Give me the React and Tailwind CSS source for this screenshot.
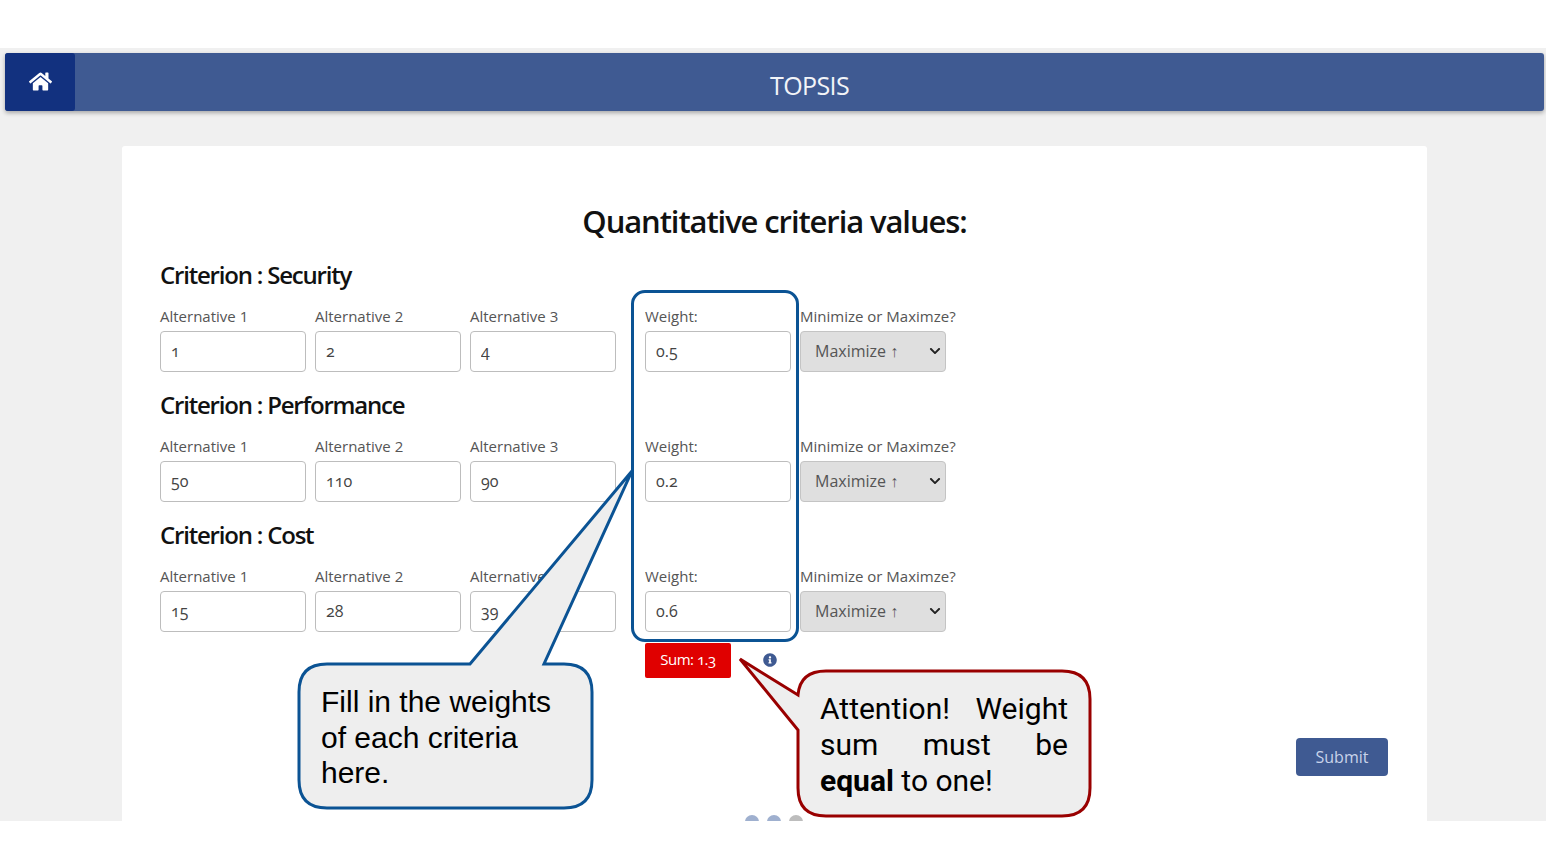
import { FaChevronDown, FaHome, FaInfoCircle } from "react-icons/fa";

const criteria = [
  { name: "Security", values: ["1", "2", "4"], weight: "0.5" },
  { name: "Performance", values: ["50", "110", "90"], weight: "0.2" },
  { name: "Cost", values: ["15", "28", "39"], weight: "0.6" },
];

const labelClass = "h-[18px] mb-[5px] text-[15px] leading-[16px] text-[#555] whitespace-nowrap";
const inputClass =
  "w-[146px] h-[41px] px-[10px] pb-[2px] bg-white border border-[#bdbdbd] rounded-[4px] text-[16px] text-[#444] oldstyle-nums outline-none";

const Field = ({ label, value, className = "" }) => (
  <div className={`w-[146px] ${className}`}>
    <div className={labelClass}>{label}</div>
    <input className={inputClass} defaultValue={value} readOnly />
  </div>
);

const CriterionRow = ({ criterion }) => (
  <div className="h-[130px]">
    <h2 className="h-[30px] mb-[18px] text-[24px] leading-[30px] font-semibold text-[#111] tracking-[-1.2px]">
      Criterion : {criterion.name}
    </h2>
    <div className="flex">
      {criterion.values.map((value, i) => (
        <Field key={i} label={`Alternative ${i + 1}`} value={value} className="mr-[9px]" />
      ))}
      <Field label="Weight:" value={criterion.weight} className="ml-[20px] mr-[9px]" />
      <div className="w-[146px]">
        <div className={labelClass}>Minimize or Maximze?</div>
        <div className="relative">
          <select className="appearance-none w-[146px] h-[41px] pl-[14px] pb-[2px] bg-[#dfdfdf] border border-[#c4c4c4] rounded-[4px] text-[16px] text-[#555]">
            <option>Maximize ↑</option>
            <option>Minimize ↓</option>
          </select>
          <FaChevronDown size={12} className="absolute right-[5px] top-[14px] text-[#222]" />
        </div>
      </div>
    </div>
  </div>
);

export default function App() {
  return (
    <div
      className="relative w-[1546px] h-[867px] overflow-hidden bg-white pt-[48px]"
      style={{ fontFamily: '"Open Sans", "Liberation Sans", sans-serif' }}
    >
      <div className="h-[773px] bg-[#f0f0f0] overflow-hidden pt-[5px]">
        <header className="flex h-[58px] ml-[5px] mr-[2px] rounded-[3px] bg-[#3f5a92] shadow-[0_2px_4px_rgba(0,0,0,0.3)]">
          <div className="flex w-[70px] items-center justify-center rounded-[3px] bg-[#12317f] pb-[2px] text-white">
            <FaHome size={23} />
          </div>
          <div className="flex-1 pt-[3px] text-center text-[25px] leading-[58px] text-[#f2f4f8] tracking-[-0.6px]">
            TOPSIS
          </div>
        </header>

        <main className="w-[1305px] h-[700px] ml-[122px] mt-[35px] rounded-[3px] bg-white px-[38px] pt-[56px]">
          <h1 className="h-[40px] mb-[18px] text-center text-[31px] leading-[39px] font-semibold text-[#111] tracking-[-1.1px]">
            Quantitative criteria values:
          </h1>
          {criteria.map((criterion) => (
            <CriterionRow key={criterion.name} criterion={criterion} />
          ))}
          <div className="flex items-center ml-[485px] -mt-[7px]">
            <div className="w-[86px] h-[35px] rounded-[2px] bg-[#e00000] text-center text-[15px] leading-[32px] text-white tracking-[-0.5px] oldstyle-nums">
              Sum: 1.3
            </div>
            <FaInfoCircle size={14} className="ml-[32px] mb-[2px] text-[#3f5a92]" />
          </div>
          <div className="flex justify-end mr-[1px] mt-[60px]">
            <button className="w-[92px] h-[38px] rounded-[4px] bg-[#3f5a92] text-[16px] text-[#c8d3ea]">Submit</button>
          </div>
          <div className="flex justify-center gap-[8px] mt-[39px] ml-[-2px]">
            <span className="w-[14px] h-[14px] rounded-full bg-[#9fb0cf]" />
            <span className="w-[14px] h-[14px] rounded-full bg-[#9fb0cf]" />
            <span className="w-[14px] h-[14px] rounded-full bg-[#bdbdbd]" />
          </div>
        </main>
      </div>

      {/* annotations pasted over the screenshot */}
      <div className="absolute left-[631px] top-[290px] w-[168px] h-[352px] rounded-[14px] border-[3px] border-[#0b5394]" />
      <svg className="absolute left-0 top-0 pointer-events-none" width="1546" height="867" fill="#eeeeee" strokeWidth="3">
        <path
          d="M327 664 H470 L632 471 L544 664 H564 Q592 664 592 692 V780 Q592 808 564 808 H327 Q299 808 299 780 V692 Q299 664 327 664 Z"
          stroke="#0b5394"
        />
        <path
          d="M826 671 H1062 Q1090 671 1090 699 V788 Q1090 816 1062 816 H826 Q798 816 798 788 V730 L740 659 L798 695 Q800 671 826 671 Z"
          stroke="#990000"
        />
      </svg>
      <div
        className="absolute left-[321px] top-[684px] w-[250px] text-[30px] leading-[35.5px] text-black"
        style={{ fontFamily: '"Liberation Sans", sans-serif' }}
      >
        Fill in the weights of each criteria here.
      </div>
      <div
        className="absolute left-[820px] top-[691px] w-[248px] text-[30px] leading-[36px] text-black text-justify"
        style={{ fontFamily: "Roboto, sans-serif" }}
      >
        Attention! Weight sum must be <b>equal</b> to one!
      </div>
    </div>
  );
}
